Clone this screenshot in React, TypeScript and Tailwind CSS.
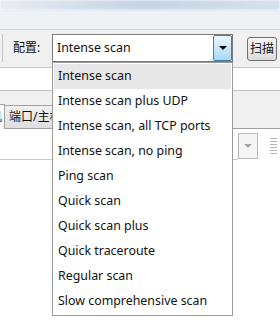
const profiles = [
  'Intense scan',
  'Intense scan plus UDP',
  'Intense scan, all TCP ports',
  'Intense scan, no ping',
  'Ping scan',
  'Quick scan',
  'Quick scan plus',
  'Quick traceroute',
  'Regular scan',
  'Slow comprehensive scan',
]

export default function App() {
  return (
    <div className="relative w-[280px] h-[336px] overflow-hidden bg-white text-[12.4px] text-[#111] font-['Noto_Sans','Noto_Sans_CJK_SC',sans-serif]">
      {/* blurred window title */}
      <div className="h-[10px] bg-gradient-to-r from-[#e8ecf1] via-[#c6d4e6] to-[#d6e1ee] blur-[1px]" />
      <div className="h-[20px] bg-[#eef1f5] border-b border-[#cfd4db]" />

      {/* toolbar */}
      <div className="h-[37px] bg-[#f0f0f0] flex items-start pt-[4px]">
        <div className="w-[3px] h-[28px] shrink-0 border-r border-[#c6c6c6]" />
        <div className="ml-[10px] w-[28px] shrink-0 h-[28px] flex items-center whitespace-nowrap text-[12px]">配置:</div>
        <div className="ml-[11px] w-[181px] h-[28px] shrink-0 flex items-center bg-white border border-[#7a7a7a]">
          <span className="flex-1 pl-[4px] whitespace-nowrap">Intense scan</span>
          <div className="w-[19px] h-[26px] flex items-center justify-center rounded-[2px] border border-[#3c7fb1] bg-gradient-to-b from-[#eaf6fd] to-[#a7d9f5]">
            <div className="w-0 h-0 border-l-[4px] border-r-[4px] border-t-[4px] border-l-transparent border-r-transparent border-t-black" />
          </div>
        </div>
        <button className="ml-[14px] mt-[3px] w-[30px] h-[24px] shrink-0 flex items-center justify-center rounded-[3px] border border-[#707070] bg-gradient-to-b from-[#f6f6f6] to-[#dcdcdc] text-[12px] whitespace-nowrap">
          扫描
        </button>
      </div>

      {/* command line field */}
      <div className="h-[24px] bg-white border-y border-[#c4c4c4]" />

      {/* tabs */}
      <div className="h-[38px] bg-[#f0f0f0] border-b border-[#a0a0a0] flex items-end text-[12px]">
        <div className="ml-[-29px] h-[25px] -mb-px bg-white border border-b-0 border-[#a0a0a0] flex items-center pl-[6px] pr-[2px] whitespace-nowrap relative z-10">
          主机
        </div>
        <div className="h-[23px] bg-gradient-to-b from-[#f2f2f2] to-[#dedede] border border-b-0 border-l-0 border-[#a0a0a0] flex items-center pl-[4px] pr-[6px] whitespace-nowrap">
          端口/主机
        </div>
      </div>

      {/* host filter */}
      <div className="pt-[4px] flex items-start">
        <div className="w-[238px] h-[27px] shrink-0 border-b border-[#c9c9c9]" />
        <div className="w-[20px] h-[26px] shrink-0 flex items-center justify-center border border-[#b8b8b8] bg-[#f5f5f5]">
          <div className="w-0 h-0 border-l-[4px] border-r-[4px] border-t-[4px] border-l-transparent border-r-transparent border-t-[#a8a8a8]" />
        </div>
        <svg className="ml-[12px] mt-[5px]" width="7" height="16" viewBox="0 0 7 16">
          {[0.5, 3.5, 6.5, 9.5, 12.5, 15.5].map((y) => (
            <line key={y} x1="0" y1={y} x2="7" y2={y} stroke="#b5b5b5" strokeWidth="1" />
          ))}
        </svg>
      </div>

      {/* profile dropdown */}
      <div className="absolute left-[52px] top-[62px] w-[181px] bg-white border border-[#9a9a9a] p-[1px] z-20">
        {profiles.map((p, i) => (
          <div
            key={p}
            className={`h-[25px] pl-[4px] flex items-center whitespace-nowrap ${i === 0 ? 'bg-[#e8e8e8]' : ''}`}
          >
            {p}
          </div>
        ))}
      </div>
    </div>
  )
}
